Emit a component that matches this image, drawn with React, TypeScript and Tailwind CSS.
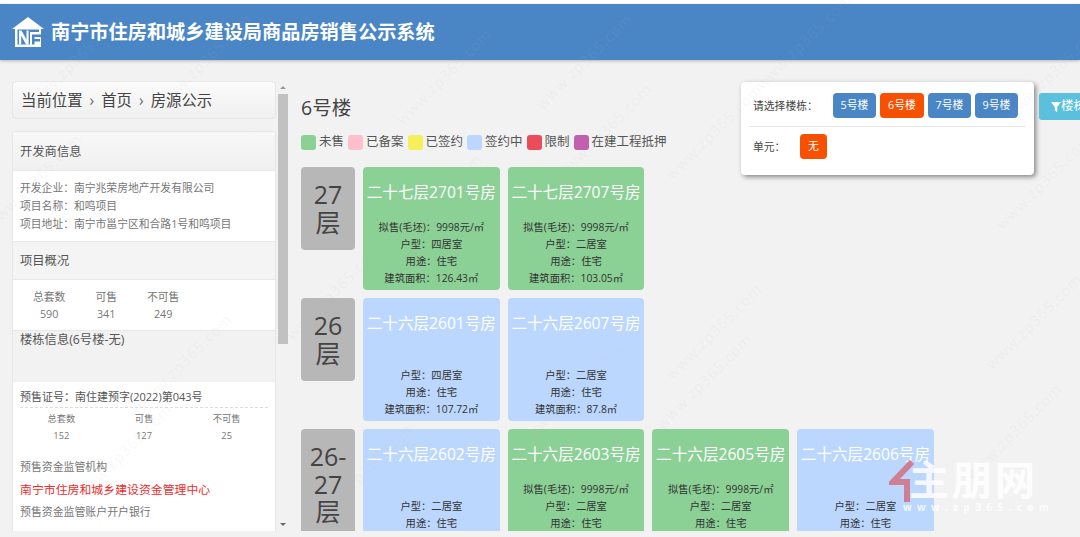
const marks = [
  [60, 60], [190, 60], [430, 75], [570, 60], [790, 40], [1040, 70],
  [20, 180], [420, 200], [590, 130], [700, 130], [1030, 180],
  [170, 360], [320, 290], [700, 330], [1020, 320],
  [110, 450], [350, 470], [560, 390], [690, 380], [1000, 430],
];

const legend = [
  ['未售', 'bg-[#8bd095]'],
  ['已备案', 'bg-[#ffbfcd]'],
  ['已签约', 'bg-[#f5f05a]'],
  ['签约中', 'bg-[#bcd7fe]'],
  ['限制', 'bg-[#e94c5a]'],
  ['在建工程抵押', 'bg-[#c160ac]'],
];

type Room = { title: string; type: string; area?: string; sold?: boolean };

const rows: { floor: string; rooms: Room[] }[] = [
  {
    floor: '27层',
    rooms: [
      { title: '二十七层2701号房', type: '四居室', area: '126.43㎡', sold: true },
      { title: '二十七层2707号房', type: '二居室', area: '103.05㎡', sold: true },
    ],
  },
  {
    floor: '26层',
    rooms: [
      { title: '二十六层2601号房', type: '四居室', area: '107.72㎡' },
      { title: '二十六层2607号房', type: '二居室', area: '87.8㎡' },
    ],
  },
  {
    floor: '26-27层',
    rooms: [
      { title: '二十六层2602号房', type: '二居室', area: '89.5㎡' },
      { title: '二十六层2603号房', type: '二居室', area: '89.5㎡', sold: true },
      { title: '二十六层2605号房', type: '二居室', area: '89.5㎡', sold: true },
      { title: '二十六层2606号房', type: '二居室', area: '89.5㎡' },
    ],
  },
];

function RoomCard({ room }: { room: Room }) {
  return (
    <div className={`w-[136.7px] h-[123px] shrink-0 rounded-[4px] flex flex-col justify-between items-center pt-[15px] pb-[3px] ${room.sold ? 'bg-[#8bd095]' : 'bg-[#bcd7fe]'}`}>
      <div className="text-[15.6px] leading-[20px] text-white whitespace-nowrap">{room.title}</div>
      <div className="text-[10.3px] leading-[17px] text-[#333] text-center whitespace-nowrap">
        {room.sold && <div>拟售(毛坯)：9998元/㎡</div>}
        <div>户型：{room.type}</div>
        <div>用途：住宅</div>
        <div>建筑面积：{room.area}</div>
      </div>
    </div>
  );
}

function Stat({ label, value }: { label: string; value: string }) {
  return (
    <div className="text-center">
      <div>{label}</div>
      <div>{value}</div>
    </div>
  );
}

export default function App() {
  return (
    <div className="relative h-[537px] w-[1080px] overflow-hidden bg-[#f2f2f2] [font-family:'Open_Sans','Noto_Sans_CJK_SC',sans-serif]">
      <div className="h-[4px] bg-white" />
      <header className="h-[56px] bg-[#4a86c5] shadow-[0_1px_3px_rgba(0,0,0,0.25)] flex items-center pl-[12px]">
        <svg width="32" height="30" viewBox="0 0 32 30" className="shrink-0">
          <path d="M16 0 L32 12 L0 12 Z" fill="#fff" />
          <path d="M3 10 H29 V30 H3 Z" fill="#fff" />
          <path d="M5.5 12.5 H27 V15 H18 V27.5 H5.5 Z" fill="#4a86c5" />
          <path d="M7 27.5 V13.5 H9.5 L14.5 22.5 V13.5 H16.6 V27.5 H14 L9.2 18.8 V27.5 Z" fill="#fff" />
          <path d="M20 17.5 H29 V20 H22.5 V22 H28 V24.5 H22.5 V27.5 H20 Z" fill="#4a86c5" />
        </svg>
        <h1 className="ml-[7px] text-[19.2px] font-bold text-white whitespace-nowrap">南宁市住房和城乡建设局商品房销售公示系统</h1>
      </header>

      <div className="h-[471px] flex pt-[21px] pl-[12px] overflow-hidden">
        <aside className="w-[264px] shrink-0 flex flex-col gap-[12px]">
          <div className="h-[38px] shrink-0 rounded-[4px] border border-[#e6e6e6] bg-gradient-to-b from-[#fbfbfb] to-[#f0f0f0] flex items-center pl-[8px] pt-[1px] text-[15.4px] text-[#444] whitespace-nowrap">
            当前位置<span className="mx-[7px] text-[#666]">›</span>首页<span className="mx-[7px] text-[#666]">›</span>房源公示
          </div>

          <div className="flex-1 rounded-t-[4px] border-x border-t border-[#e6e6e6] bg-white overflow-hidden text-[#777]">
            <div className="h-[39px] bg-gradient-to-b from-[#f8f8f8] to-[#f0f0f0] border-b border-[#e8e8e8] flex items-center pl-[7px] pt-[2px] text-[12.3px] text-[#555]">开发商信息</div>
            <div className="h-[70px] pt-[8px] pl-[7px] text-[10.8px] leading-[18.2px] whitespace-nowrap">
              <div>开发企业：南宁兆荣房地产开发有限公司</div>
              <div>项目名称：和鸣项目</div>
              <div>项目地址：南宁市邕宁区和合路1号和鸣项目</div>
            </div>
            <div className="h-[39px] bg-[#f4f4f4] border-y border-[#e8e8e8] flex items-center pl-[7px] pt-[2px] text-[12.3px] text-[#555]">项目概况</div>
            <div className="h-[50px] pt-[8px] pl-[20px] flex gap-[30px] text-[10.8px] leading-[17px]">
              <Stat label="总套数" value="590" />
              <Stat label="可售" value="341" />
              <Stat label="不可售" value="249" />
            </div>
            <div className="h-[52px] bg-[#f2f2f2] border-t border-[#e8e8e8] pl-[7px] text-[12.3px] leading-[18px] text-[#555]">楼栋信息(6号楼-无)</div>
            <div className="px-[7px] pt-[6px] whitespace-nowrap">
              <div className="h-[20px] border-b border-dashed border-[#ddd] text-[11px] leading-[17px] text-[#555]">预售证号：南住建预字(2022)第043号</div>
              <div className="mt-[2px] grid grid-cols-3 text-center text-[9.3px] leading-[17px]">
                <div>总套数</div>
                <div>可售</div>
                <div>不可售</div>
                <div>152</div>
                <div>127</div>
                <div>25</div>
              </div>
              <div className="mt-[14px] text-[10.9px] leading-[17px]">预售资金监管机构</div>
              <div className="mt-[6px] text-[11.9px] leading-[17px] text-[#ee2a2a]">南宁市住房和城乡建设资金管理中心</div>
              <div className="mt-[5px] text-[10.9px] leading-[17px]">预售资金监管账户开户银行</div>
            </div>
          </div>
        </aside>

        <div className="w-[10px] ml-[2px] h-[450px] shrink-0 flex flex-col items-center">
          <div className="h-[13px] flex items-center">
            <div className="w-0 h-0 border-x-[3px] border-x-transparent border-b-[3px] border-b-[#999]" />
          </div>
          <div className="w-[10px] h-[250px] bg-[#c1c1c1]" />
          <div className="flex-1" />
          <div className="h-[13px] flex items-center">
            <div className="w-0 h-0 border-x-[3px] border-x-transparent border-t-[3px] border-t-[#666]" />
          </div>
        </div>

        <main className="ml-[13px] flex-1 overflow-hidden h-[450px]">
          <h2 className="mt-[13px] text-[19.5px] leading-[28px] text-[#444]">6号楼</h2>
          <div className="mt-[13px] flex items-center h-[15px] gap-[4px] text-[12.5px] text-[#555] whitespace-nowrap">
            {legend.map(([name, color]) => (
              <div key={name} className="flex items-center gap-[3px]">
                <span className={`w-[15px] h-[15px] rounded-[3px] ${color}`} />
                <span>{name}</span>
              </div>
            ))}
          </div>

          <div className="mt-[17px] flex flex-col gap-[8px]">
            {rows.map((row) => (
              <div key={row.floor} className="flex gap-[8px] items-start">
                <div className="w-[54px] shrink-0 rounded-[4px] bg-[#b7b7b7] px-2 pt-[14px] pb-[14px] text-center text-[25px] leading-[27.5px] text-[#444]">{row.floor}</div>
                {row.rooms.map((room) => (
                  <RoomCard key={room.title} room={room} />
                ))}
              </div>
            ))}
          </div>
        </main>
      </div>

      <div className="absolute left-[741px] top-[82px] w-[293px] h-[93px] rounded-[4px] bg-white shadow-[2px_2px_5px_rgba(0,0,0,0.45)] px-[8px] text-[10.8px] text-[#444]">
        <div className="h-[45px] pt-[2px] flex items-center border-b border-[#e8e8e8] pl-[4px]">
          <span className="w-[80px] pt-[2px]">请选择楼栋：</span>
          <div className="flex gap-[4px]">
            {['5号楼', '6号楼', '7号楼', '9号楼'].map((b) => (
              <span key={b} className={`h-[25px] rounded-[4px] flex items-center justify-center text-white ${b === '6号楼' ? 'w-[44px] bg-[#f75000]' : 'w-[43px] bg-[#4a86c6]'}`}>{b}</span>
            ))}
          </div>
        </div>
        <div className="mt-[7px] flex items-center pl-[4px]">
          <span className="w-[47px] pt-[1px]">单元：</span>
          <span className="w-[27px] h-[25px] rounded-[4px] bg-[#f75000] flex items-center justify-center text-white">无</span>
        </div>
      </div>

      <div className="absolute left-[1039px] top-[93px] w-[60px] h-[27px] rounded-[3px] bg-[#5bc0de] flex items-center pl-[12px] text-[12.5px] text-white whitespace-nowrap">
        <svg width="10" height="10" viewBox="0 0 10 10" className="shrink-0">
          <path d="M0 0 H10 L6.2 5 V10 L3.8 8.5 V5 Z" fill="#fff" />
        </svg>
        楼栋筛选
      </div>

      {marks.map(([x, y]) => (
        <span
          key={`${x}-${y}`}
          className="absolute -rotate-45 text-[15px] tracking-[1px] text-[#bbbbbb]/10 whitespace-nowrap pointer-events-none"
          style={{ left: x - 50, top: y - 10 }}
        >
          www.zp365.com
        </span>
      ))}

      <div className="absolute left-[889px] top-[460px] w-[150px] h-[60px] pointer-events-none">
        <span className="absolute left-[20px] -top-[8px] text-[40px] leading-[52px] tracking-[3px] font-bold text-white/85 whitespace-nowrap [font-family:'Noto_Sans_CJK_SC',sans-serif]">主朋网</span>
        <span className="absolute left-[14px] top-[40px] text-[10px] font-bold tracking-[5.4px] text-white/80 whitespace-nowrap">www.zp365.com</span>
        <svg width="32" height="45" viewBox="0 0 32 45" className="absolute left-0 top-0">
          <path d="M23 2 L4 22 H18 V42" fill="none" stroke="#cf7f93" strokeWidth="6" />
        </svg>
      </div>

      <div className="absolute left-0 right-0 bottom-0 h-[6px] bg-[#f2f2f2]" />
    </div>
  );
}
